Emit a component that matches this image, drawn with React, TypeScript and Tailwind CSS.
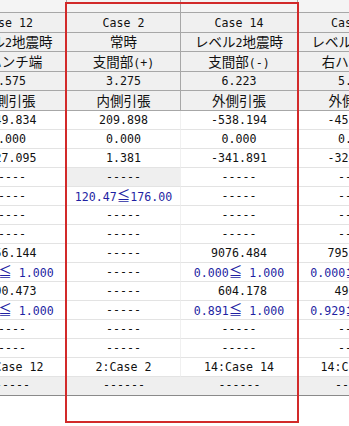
type Cell = { text: string; blue?: boolean; shade?: boolean };

const widths = ["w-[116px]", "w-[114px]", "w-[117px]", "w-[116px]"];
const headerHeights = ["h-[20px]", "h-[19px]", "h-[20px]", "h-[19px]", "h-[20px]"];

const header: string[][] = [
  ["Case 12", "Case 2", "Case 14", "Case 14"],
  ["レベル2地震時", "常時", "レベル2地震時", "レベル2地震時"],
  ["左ハンチ端", "支間部(+)", "支間部(-)", "右ハンチ端"],
  ["5.575", "3.275", "6.223", "5.923"],
  ["外側引張", "内側引張", "外側引張", "外側引張"],
];

const c = (text: string, blue = false, shade = false): Cell => ({ text, blue, shade });

const body: Cell[][] = [
  [c("-449.834"), c("209.898"), c("-538.194"), c("-455.102")],
  [c("0.000"), c("0.000"), c("0.000"), c("0.000")],
  [c("-327.095"), c("1.381"), c("-341.891"), c("-324.617")],
  [c("-----"), c("-----", false, true), c("-----"), c("-----")],
  [c("-----"), c("120.47≦176.00", true), c("-----"), c("-----")],
  [c("-----"), c("-----"), c("-----"), c("-----")],
  [c("-----"), c("-----"), c("-----"), c("-----")],
  [c("7956.144"), c("-----"), c("9076.484"), c("7951.306")],
  [c("0.000≦ 1.000", true), c("-----"), c("0.000≦ 1.000", true), c("0.000≦ 1.000", true)],
  [c(" 490.473"), c("-----"), c(" 604.178"), c(" 490.812")],
  [c("0.780≦ 1.000", true), c("-----"), c("0.891≦ 1.000", true), c("0.929≦ 1.000", true)],
  [c("-----"), c("-----"), c("-----"), c("-----")],
  [c("-----"), c("-----"), c("-----"), c("-----")],
  [c("12:Case 12"), c("2:Case 2"), c("14:Case 14"), c("14:Case 14")],
];

// full-width glyphs (kana, kanji, ≦) are twice as wide as the half-width ones
function Txt({ text }: { text: string }) {
  const parts = text.split(/([\u3000-\u9fff\uff00-\uffef\u2266]+)/);
  return (
    <span className="whitespace-pre leading-[16px]">
      {parts.map((p, i) =>
        i % 2 === 1 ? (
          <span key={i} className="text-[13.5px] leading-[16px] font-['Noto_Sans_CJK_JP',sans-serif]">
            {p}
          </span>
        ) : (
          p
        )
      )}
    </span>
  );
}

export default function App() {
  return (
    <div className="relative w-[349px] h-[426px] overflow-hidden bg-white text-[11.6px] text-[#111] font-['DejaVu_Sans_Mono','Noto_Sans_CJK_JP',monospace]">
      <div className="-ml-[49px] flex flex-col">

        {/* strip of the row above, cut off */}
        <div className="flex h-[13px]">
          {widths.map((w, i) => (
            <div key={i} className={`${w} shrink-0 bg-[#f4f4f4] border-r border-b border-[#a7a7a7]`} />
          ))}
        </div>

        {header.map((row, r) => (
          <div key={r} className={`flex ${headerHeights[r]}`}>
            {row.map((t, i) => (
              <div
                key={i}
                className={`${widths[i]} shrink-0 bg-[#f0f0f0] border-r border-b border-[#a7a7a7] flex items-center justify-center overflow-hidden`}
              >
                <Txt text={t} />
              </div>
            ))}
          </div>
        ))}

        {body.map((row, r) => (
          <div key={r} className="flex h-[19px]">
            {row.map((cell, i) => (
              <div
                key={i}
                className={`${widths[i]} shrink-0 border-r border-b border-r-[#f0f0f0] border-b-[#e3e3e3] flex items-center justify-center overflow-hidden ${cell.shade ? "bg-[#efefef]" : "bg-white"} ${cell.blue ? "text-[#1f1fa3]" : ""}`}
              >
                <Txt text={cell.text} />
              </div>
            ))}
          </div>
        ))}

        <div className="flex h-[19px] border-b border-[#8a8a8a]">
          {widths.map((w, i) => (
            <div key={i} className={`${w} shrink-0 bg-[#efefef] flex items-center justify-center`}>
              ------
            </div>
          ))}
        </div>
      </div>

      <div className="absolute left-[65px] top-[2px] w-[234px] h-[421px] border-2 border-[#d22a2a]" />
    </div>
  );
}
